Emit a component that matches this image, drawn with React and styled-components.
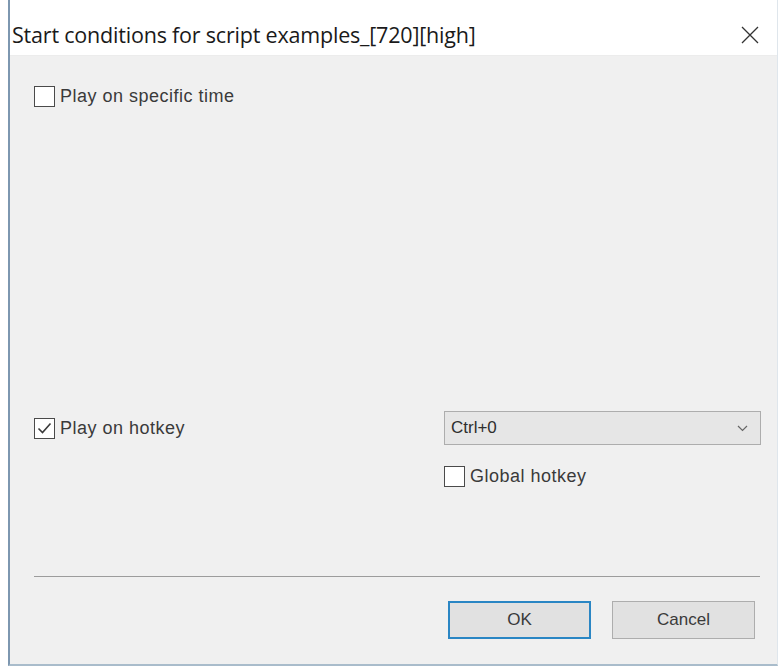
import React from 'react'
import styled, { createGlobalStyle } from 'styled-components'

const Global = createGlobalStyle`
  html, body {
    margin: 0;
    padding: 0;
    background: #ffffff;
  }
  body {
    font-family: "Liberation Sans", Arial, sans-serif;
  }
`

const Window = styled.div`
  margin-left: 8px;
  width: 770px;
  height: 666px;
  display: flex;
  flex-direction: column;
  border-left: 2px solid #7d97b0;
  border-right: 1px solid #dfe6ec;
  border-bottom: 2px solid #a9bccb;
  box-sizing: border-box;
  background: #f0f0f0;
`

const TitleBar = styled.div`
  height: 56px;
  flex: none;
  display: flex;
  align-items: center;
  justify-content: space-between;
  padding: 14px 10px 0 2px;
  box-sizing: border-box;
  background: #ffffff;
  border-bottom: 1px solid #ececec;
`

const Title = styled.div`
  font-family: "Open Sans", "Noto Sans", sans-serif;
  font-size: 21.5px;
  color: #1a1a1a;
  letter-spacing: -0.2px;
`

const Close = styled.button`
  width: 26px;
  height: 26px;
  padding: 0;
  border: none;
  background: transparent;
  display: flex;
  align-items: center;
  justify-content: center;
  margin-right: 4px;
`

const Client = styled.div`
  flex: 1;
  display: flex;
  flex-direction: column;
  padding: 30px 20px 25px 24px;
`

const Check = styled.label`
  display: flex;
  align-items: center;
  gap: 5px;
  font-size: 18px;
  color: #3a3a3a;
  letter-spacing: 0.5px;
`

const Box = styled.span`
  width: 19px;
  height: 19px;
  flex: none;
  border: 1px solid #4a4a4a;
  background: #ffffff;
  display: flex;
  align-items: center;
  justify-content: center;
`

const HotkeyRow = styled.div`
  margin-top: auto;
  display: grid;
  grid-template-columns: 410px 317px;
  align-items: start;
`

const HotkeyCheck = styled.div`
  padding-top: 7px;
`

const Options = styled.div`
  display: flex;
  flex-direction: column;
  gap: 21px;
`

const Combo = styled.div`
  height: 34px;
  box-sizing: border-box;
  border: 1px solid #adadad;
  background: #e6e6e6;
  display: flex;
  align-items: center;
  justify-content: space-between;
  padding: 0 12px 0 6px;
  font-size: 17px;
  color: #2e2e2e;
`

const Separator = styled.hr`
  margin: 89px 0 0;
  border: none;
  border-top: 1px solid #9c9c9c;
  width: 726px;
`

const Buttons = styled.div`
  margin-top: 24px;
  display: flex;
  justify-content: flex-end;
  gap: 21px;
  padding-right: 2px;
`

const Button = styled.button`
  width: 143px;
  height: 38px;
  box-sizing: border-box;
  font-family: "Liberation Sans", Arial, sans-serif;
  font-size: 17px;
  color: #3a3a3a;
  background: #e1e1e1;
  border: ${p => (p.$default ? '2px solid #2a86c4' : '1px solid #adadad')};
`

const Tick = () => (
  <svg width="15" height="13" viewBox="0 0 15 13">
    <path d="M1.5 6.5 L5.5 10.5 L13.5 1.5" fill="none" stroke="#3a3a3a" strokeWidth="1.6" />
  </svg>
)

const CheckBox = ({ checked, children }) => (
  <Check>
    <Box>{checked && <Tick />}</Box>
    {children}
  </Check>
)

export default function App() {
  return (
    <>
      <Global />
      <Window>
        <TitleBar>
          <Title>Start conditions for script examples_[720][high]</Title>
          <Close aria-label="Close">
            <svg width="18" height="18" viewBox="0 0 18 18">
              <path d="M1 1 L17 17 M17 1 L1 17" stroke="#333" strokeWidth="1.3" />
            </svg>
          </Close>
        </TitleBar>
        <Client>
          <CheckBox>Play on specific time</CheckBox>
          <HotkeyRow>
            <HotkeyCheck>
              <CheckBox checked>Play on hotkey</CheckBox>
            </HotkeyCheck>
            <Options>
              <Combo>
                <span>Ctrl+0</span>
                <svg width="11" height="7" viewBox="0 0 11 7">
                  <path d="M1 1 L5.5 5.5 L10 1" fill="none" stroke="#666" strokeWidth="1.2" />
                </svg>
              </Combo>
              <CheckBox>Global hotkey</CheckBox>
            </Options>
          </HotkeyRow>
          <Separator />
          <Buttons>
            <Button $default>OK</Button>
            <Button>Cancel</Button>
          </Buttons>
        </Client>
      </Window>
    </>
  )
}
